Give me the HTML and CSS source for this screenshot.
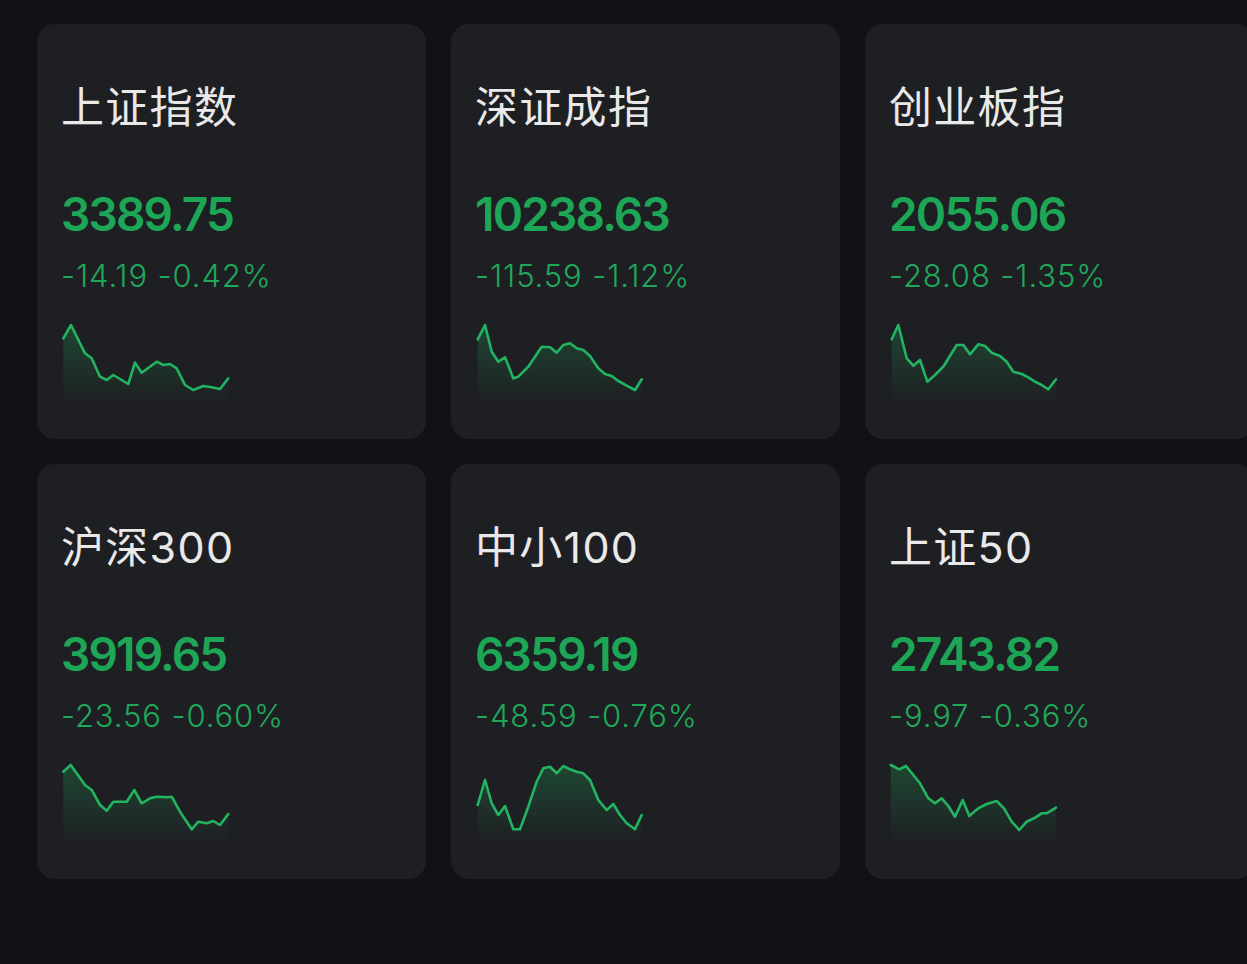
FILE: index.html
```html
<!DOCTYPE html>
<html lang="zh-CN">
<head>
<meta charset="utf-8">
<title>指数</title>
<link rel="stylesheet" href="styles.css">
</head>
<body>
<svg width="0" height="0" class="defs">
  <defs>
    <linearGradient id="fillg" x1="0" y1="0" x2="0" y2="1">
      <stop offset="0" stop-color="#1fa456" stop-opacity="0.3"/>
      <stop offset="1" stop-color="#1fa456" stop-opacity="0"/>
    </linearGradient>
  </defs>
</svg>
<main class="grid">
  <section class="card">
    <h2 class="name">上证指数</h2>
    <div class="price">3389.75</div>
    <div class="change">-14.19 -0.42%</div>
    <svg class="spark" viewBox="0 0 170 82" width="170" height="82">
      <path class="area" d="M2.3,18.3 L10,5 L24,33.3 L30.7,38.3 L39,56.7 L45.7,60 L52.3,55 L67.3,64 L74,42.7 L80.7,52.7 L95.7,41.7 L102.3,45 L109,44 L115.7,48.3 L124,65 L132.3,70 L142.3,66 L150.7,67.3 L159,69 L167.3,58.3 L167.3,82 L2.3,82 Z"/>
      <polyline class="line" points="2.3,18.3 10,5 24,33.3 30.7,38.3 39,56.7 45.7,60 52.3,55 67.3,64 74,42.7 80.7,52.7 95.7,41.7 102.3,45 109,44 115.7,48.3 124,65 132.3,70 142.3,66 150.7,67.3 159,69 167.3,58.3"/>
    </svg>
  </section>
  <section class="card">
    <h2 class="name">深证成指</h2>
    <div class="price">10238.63</div>
    <div class="change">-115.59 -1.12%</div>
    <svg class="spark" viewBox="0 0 170 82" width="170" height="82">
      <path class="area" d="M2.7,19.3 L10,5 L16.7,31.7 L23.3,41.7 L30,37.3 L38.3,58.3 L43.3,56.7 L53.3,46.7 L66.7,26.7 L75,27.3 L81.7,32.7 L88.3,25 L95,23.3 L101.7,28.3 L108.3,30 L115,36 L123.3,48.3 L130,54 L136.7,56 L143.3,61 L151.7,65.7 L160,70 L166.7,59.3 L166.7,82 L2.7,82 Z"/>
      <polyline class="line" points="2.7,19.3 10,5 16.7,31.7 23.3,41.7 30,37.3 38.3,58.3 43.3,56.7 53.3,46.7 66.7,26.7 75,27.3 81.7,32.7 88.3,25 95,23.3 101.7,28.3 108.3,30 115,36 123.3,48.3 130,54 136.7,56 143.3,61 151.7,65.7 160,70 166.7,59.3"/>
    </svg>
  </section>
  <section class="card">
    <h2 class="name">创业板指</h2>
    <div class="price">2055.06</div>
    <div class="change">-28.08 -1.35%</div>
    <svg class="spark" viewBox="0 0 170 82" width="170" height="82">
      <path class="area" d="M2.7,19.3 L9.3,5 L17.7,38.3 L24.3,45.7 L31,40 L38.3,61.7 L46,55 L54.3,46.7 L67.7,25 L74.3,25 L81,34.3 L89.3,24.3 L96,26 L102.7,32.7 L111,36 L117.7,41.7 L124.3,51.7 L132.7,54 L139.3,57.3 L146,61.7 L152.7,65 L159.3,69.3 L167,59.3 L167,82 L2.7,82 Z"/>
      <polyline class="line" points="2.7,19.3 9.3,5 17.7,38.3 24.3,45.7 31,40 38.3,61.7 46,55 54.3,46.7 67.7,25 74.3,25 81,34.3 89.3,24.3 96,26 102.7,32.7 111,36 117.7,41.7 124.3,51.7 132.7,54 139.3,57.3 146,61.7 152.7,65 159.3,69.3 167,59.3"/>
    </svg>
  </section>
  <section class="card">
    <h2 class="name">沪深300</h2>
    <div class="price">3919.65</div>
    <div class="change">-23.56 -0.60%</div>
    <svg class="spark" viewBox="0 0 170 82" width="170" height="82">
      <path class="area" d="M2.3,11.7 L9.7,5 L24,25 L30.7,30 L39,45 L45.7,50.7 L52.3,41.7 L65.7,41.7 L73.3,30 L80.7,43.3 L89,38.3 L95.7,36.7 L107.3,37.3 L110.7,36.7 L119,51.7 L130.7,69.3 L137.3,61.7 L145.7,63.3 L152.3,61 L159,65 L167.3,54 L167.3,82 L2.3,82 Z"/>
      <polyline class="line" points="2.3,11.7 9.7,5 24,25 30.7,30 39,45 45.7,50.7 52.3,41.7 65.7,41.7 73.3,30 80.7,43.3 89,38.3 95.7,36.7 107.3,37.3 110.7,36.7 119,51.7 130.7,69.3 137.3,61.7 145.7,63.3 152.3,61 159,65 167.3,54"/>
    </svg>
  </section>
  <section class="card">
    <h2 class="name">中小100</h2>
    <div class="price">6359.19</div>
    <div class="change">-48.59 -0.76%</div>
    <svg class="spark" viewBox="0 0 170 82" width="170" height="82">
      <path class="area" d="M2.7,45 L10,20 L16.7,43.3 L23.3,55 L30,46 L38.3,69.3 L45,69.3 L53.3,46.7 L61.7,21.7 L68.3,8.3 L75,6.7 L81.7,13.3 L88.3,6 L95,9.3 L101.7,11.7 L108.3,13.3 L115,20 L123.3,40 L131.7,50 L138.3,44 L145,55 L151.7,63.3 L160,69.3 L166.7,55 L166.7,82 L2.7,82 Z"/>
      <polyline class="line" points="2.7,45 10,20 16.7,43.3 23.3,55 30,46 38.3,69.3 45,69.3 53.3,46.7 61.7,21.7 68.3,8.3 75,6.7 81.7,13.3 88.3,6 95,9.3 101.7,11.7 108.3,13.3 115,20 123.3,40 131.7,50 138.3,44 145,55 151.7,63.3 160,69.3 166.7,55"/>
    </svg>
  </section>
  <section class="card">
    <h2 class="name">上证50</h2>
    <div class="price">2743.82</div>
    <div class="change">-9.97 -0.36%</div>
    <svg class="spark" viewBox="0 0 170 82" width="170" height="82">
      <path class="area" d="M1.7,5 L10.3,9.3 L17,6 L24.3,15 L31,23.3 L39.3,38.3 L46,43.3 L52.7,38.3 L59.3,46 L66,56.7 L73.7,40 L80.3,56 L89.3,48.3 L97.7,44 L107.7,41 L115,48.3 L122.7,61.7 L130.3,70 L137.7,61.7 L145,58.3 L152.7,53.3 L157.7,53.3 L167,47.7 L167,82 L1.7,82 Z"/>
      <polyline class="line" points="1.7,5 10.3,9.3 17,6 24.3,15 31,23.3 39.3,38.3 46,43.3 52.7,38.3 59.3,46 66,56.7 73.7,40 80.3,56 89.3,48.3 97.7,44 107.7,41 115,48.3 122.7,61.7 130.3,70 137.7,61.7 145,58.3 152.7,53.3 157.7,53.3 167,47.7"/>
    </svg>
  </section>
</main>
</body>
</html>
```

FILE: styles.css
```css
html, body {
  margin: 0;
  padding: 0;
  overflow: hidden;
  background: #111216;
  height: 100%;
}

body {
  font-family: "Inter", "Noto Sans CJK SC", sans-serif;
}

.defs {
  position: absolute;
  width: 0;
  height: 0;
}

.grid {
  display: grid;
  grid-template-columns: repeat(3, 389px);
  column-gap: 25px;
  row-gap: 25px;
  padding: 24px 0 0 37px;
  width: max-content;
}

.card {
  background: #1e1f23;
  border-radius: 18px;
  height: 415px;
  box-sizing: border-box;
  padding: 61px 24px 0 24px;
  display: flex;
  flex-direction: column;
}

.name {
  margin: 0;
  font-size: 43px;
  line-height: 44px;
  height: 44px;
  font-weight: 400;
  color: #e9e9ea;
  letter-spacing: 1.3px;
}

.price {
  margin-top: 60px;
  font-size: 46px;
  line-height: 50px;
  height: 50px;
  font-weight: 600;
  color: #1ea657;
  letter-spacing: -1.8px;
}

.change {
  margin-top: 19px;
  font-size: 31px;
  line-height: 36px;
  height: 36px;
  font-weight: 300;
  color: #20a85a;
  letter-spacing: 0.9px;
}

.spark {
  margin-top: 26px;
  display: block;
  overflow: visible;
}

.spark .area {
  fill: url(#fillg);
  stroke: none;
}

.spark .line {
  fill: none;
  stroke: #22b460;
  stroke-width: 2.6;
  stroke-linejoin: round;
  stroke-linecap: round;
}
```
